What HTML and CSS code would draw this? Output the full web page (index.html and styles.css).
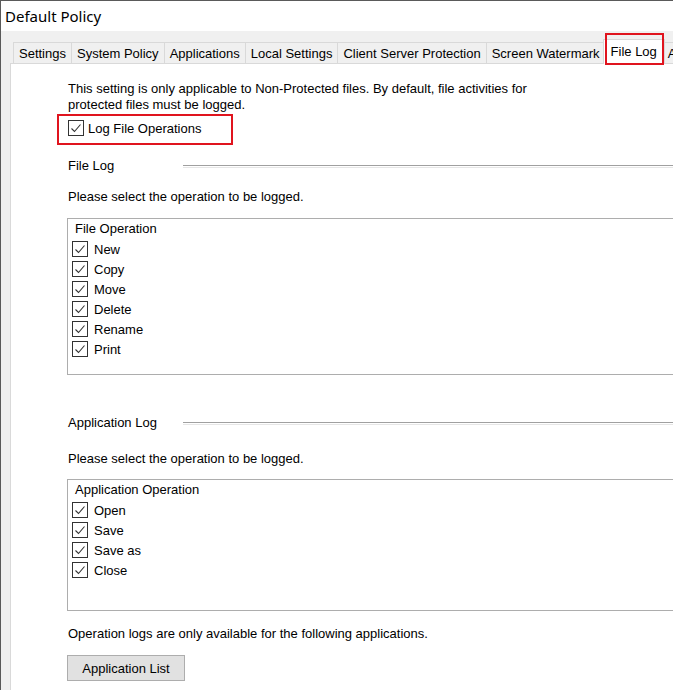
FILE: index.html
```html
<!DOCTYPE html>
<html lang="en">
  <head>
    <meta charset="UTF-8" />
    <meta name="viewport" content="width=device-width, initial-scale=1.0" />
    <title>Default Policy</title>
    <link rel="stylesheet" href="styles.css">
  </head>
  <body>
    <div class="window">
      <div class="titlebar">Default Policy</div>

      <div class="client">
        <div class="tabs">
          <div class="tab">Settings</div>
          <div class="tab">System Policy</div>
          <div class="tab">Applications</div>
          <div class="tab">Local Settings</div>
          <div class="tab">Client Server Protection</div>
          <div class="tab">Screen Watermark</div>
          <div class="tab active">File Log</div>
          <div class="tab">Access Log</div>
        </div>

        <div class="panel">
          <p class="note">
            This setting is only applicable to Non-Protected files. By default, file activities for<br>
            protected files must be logged.
          </p>

          <div class="highlight">
            <label class="check">
              <span class="box"><svg viewBox="0 0 14 14"><path d="M2.5 7.5l3 3 6-7" /></svg></span>
              Log File Operations
            </label>
          </div>

          <div class="section-head file-head">
            <span>File Log</span>
            <span class="rule"></span>
          </div>

          <p class="hint">Please select the operation to be logged.</p>

          <div class="group file-group">
            <div class="group-title">File Operation</div>
            <label class="check"><span class="box"><svg viewBox="0 0 14 14"><path d="M2.5 7.5l3 3 6-7" /></svg></span>New</label>
            <label class="check"><span class="box"><svg viewBox="0 0 14 14"><path d="M2.5 7.5l3 3 6-7" /></svg></span>Copy</label>
            <label class="check"><span class="box"><svg viewBox="0 0 14 14"><path d="M2.5 7.5l3 3 6-7" /></svg></span>Move</label>
            <label class="check"><span class="box"><svg viewBox="0 0 14 14"><path d="M2.5 7.5l3 3 6-7" /></svg></span>Delete</label>
            <label class="check"><span class="box"><svg viewBox="0 0 14 14"><path d="M2.5 7.5l3 3 6-7" /></svg></span>Rename</label>
            <label class="check"><span class="box"><svg viewBox="0 0 14 14"><path d="M2.5 7.5l3 3 6-7" /></svg></span>Print</label>
          </div>

          <div class="section-head app-head">
            <span>Application Log</span>
            <span class="rule"></span>
          </div>

          <p class="hint app-hint">Please select the operation to be logged.</p>

          <div class="group app-group">
            <div class="group-title">Application Operation</div>
            <label class="check"><span class="box"><svg viewBox="0 0 14 14"><path d="M2.5 7.5l3 3 6-7" /></svg></span>Open</label>
            <label class="check"><span class="box"><svg viewBox="0 0 14 14"><path d="M2.5 7.5l3 3 6-7" /></svg></span>Save</label>
            <label class="check"><span class="box"><svg viewBox="0 0 14 14"><path d="M2.5 7.5l3 3 6-7" /></svg></span>Save as</label>
            <label class="check"><span class="box"><svg viewBox="0 0 14 14"><path d="M2.5 7.5l3 3 6-7" /></svg></span>Close</label>
          </div>

          <p class="hint footnote">Operation logs are only available for the following applications.</p>

          <button class="btn">Application List</button>
        </div>
      </div>
    </div>
  </body>
</html>
```

FILE: styles.css
```css
body {
  margin: 0;
  width: 673px;
  height: 690px;
  overflow: hidden;
  background-color: #f0f0f0;
  font-family: "Liberation Sans", Arial, sans-serif;
  font-size: 13px;
  color: #000;
}

.window {
  height: 690px;
  border-top: 1px solid #5a5a5a;
  border-left: 1px solid #5a5a5a;
  box-sizing: border-box;
}

.titlebar {
  height: 30px;
  line-height: 30px;
  padding-left: 4px;
  background-color: #fff;
  font-family: "Noto Sans", sans-serif;
  font-size: 15px;
}

.client {
  padding: 11px 0 0 9px;
}

/* tab strip */
.tabs {
  display: flex;
  align-items: flex-end;
  height: 21px;
  padding-left: 4px;
  white-space: nowrap;
}

.tab {
  height: 19px;
  line-height: 19px;
  padding: 1px 5px 0;
  margin-left: -1px;
  border: 1px solid #d9d9d9;
  border-bottom: none;
  background-color: #f0f0f0;
}

.tab.active {
  position: relative;
  z-index: 1;
  height: 23px;
  line-height: 21px;
  margin: 0 -2px -1px -3px;
  padding: 1px 7px 0;
  background-color: #fff;
}

.tab.active::after {
  content: "";
  position: absolute;
  top: -7px;
  bottom: -1px;
  left: 1px;
  right: 0;
  border: 2px solid #e0141e;
}

.panel {
  width: 720px;
  height: 640px;
  padding: 17px 0 0 57px;
  border: 1px solid #d9d9d9;
  background-color: #fff;
}

p {
  margin: 0;
  line-height: 16px;
}

/* checkbox */
.check {
  display: flex;
  align-items: center;
  gap: 6px;
  height: 20px;
}

.box {
  width: 16px;
  height: 16px;
  box-sizing: border-box;
  border: 1px solid #333;
  background-color: #fff;
}

.box svg {
  display: block;
  width: 14px;
  height: 14px;
  fill: none;
  stroke: #333;
  stroke-width: 1.1;
}

.highlight {
  width: 176px;
  box-sizing: border-box;
  margin: 1px 0 0 -11px;
  padding: 2px 0 5px 9px;
  border: 2px solid #e0141e;
}

.highlight .check {
  gap: 4px;
}

/* section headings with etched rule */
.section-head {
  display: flex;
  align-items: center;
  line-height: 16px;
}

.section-head span:first-child {
  width: 115px;
  flex: none;
}

.rule {
  flex: 1;
  height: 1px;
  border-top: 1px solid #a0a0a0;
  border-bottom: 1px solid #e6e6e6;
  margin-top: 1px;
}

.file-head {
  margin-top: 13px;
}

.app-head {
  margin-top: 40px;
}

.hint {
  margin-top: 15px;
}

.app-hint {
  margin-top: 20px;
}

.footnote {
  margin-top: 15px;
}

/* group boxes */
.group {
  margin: 13px 0 0 -1px;
  padding: 0 0 15px 4px;
  border: 1px solid #adadad;
}

.app-group {
  margin-top: 12px;
  padding-bottom: 30px;
}

.group-title {
  line-height: 20px;
  padding-left: 3px;
}

.btn {
  display: block;
  width: 118px;
  height: 26px;
  margin: 13px 0 0 -1px;
  padding: 0;
  border: 1px solid #adadad;
  background-color: #e1e1e1;
  font-family: "Liberation Sans", Arial, sans-serif;
  font-size: 13px;
  color: #000;
}
```
